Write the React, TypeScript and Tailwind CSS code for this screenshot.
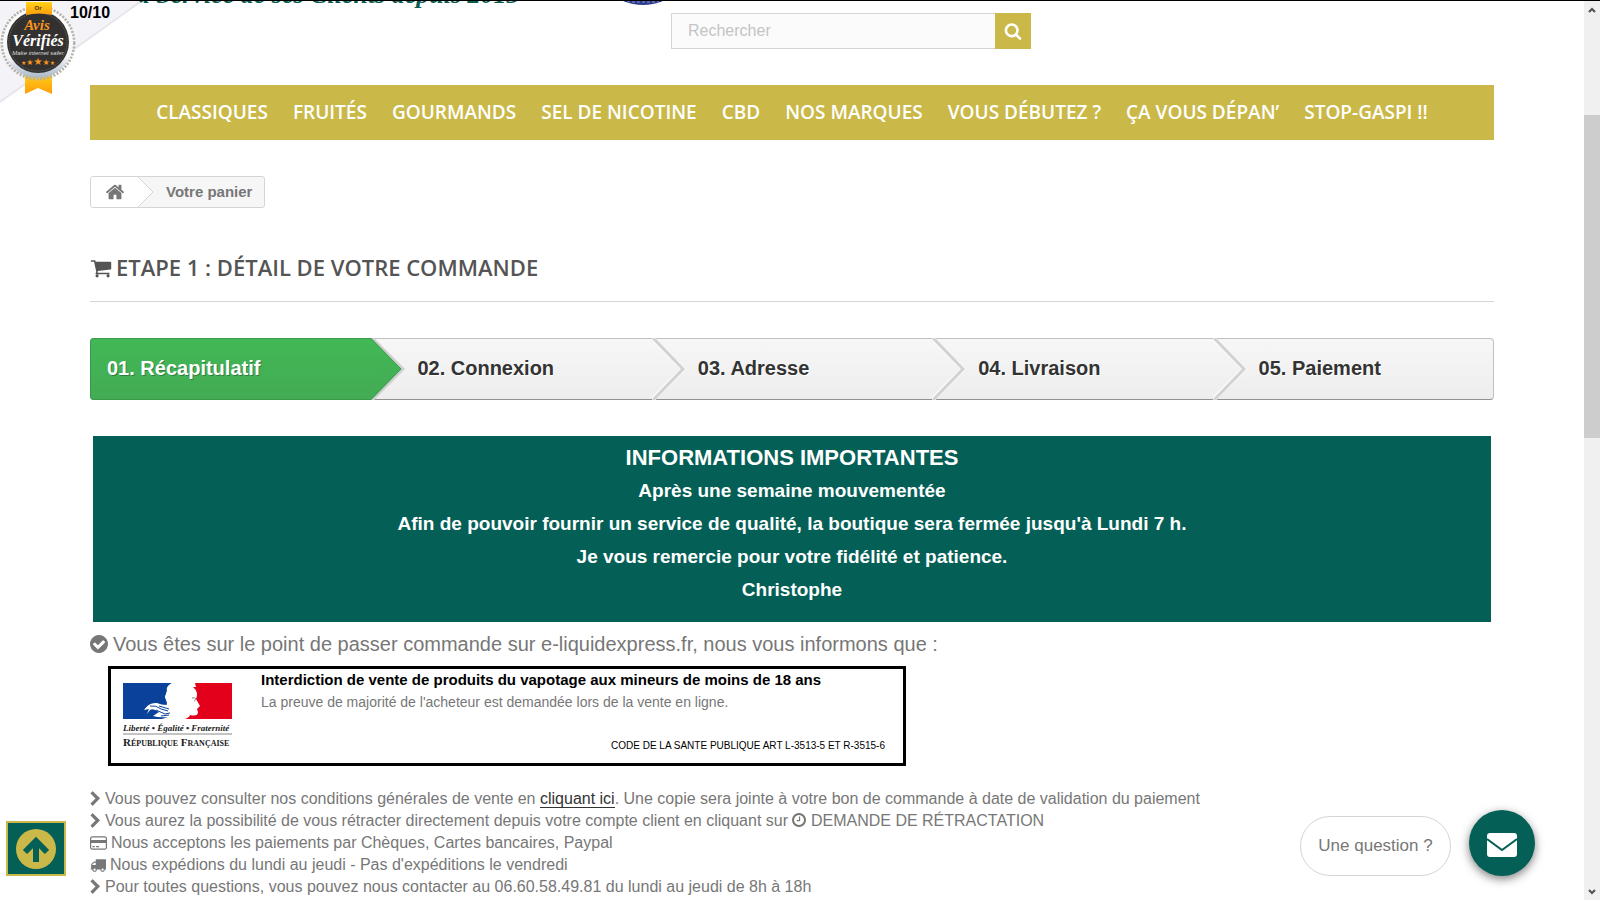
import { ReactNode, useState } from "react";

const ICONS = {
  home: "M1472 992v480q0 26-19 45t-45 19h-384v-384h-256v384h-384q-26 0-45-19t-19-45v-480q0-1 .5-3t.5-3l575-474 575 474q1 2 1 6zm223-69l-62 74q-8 9-21 11h-3q-13 0-21-7l-692-577-692 577q-12 8-24 7-13-2-21-11l-62-74q-8-10-7-23.500t11-21.500l719-599q32-26 76-26t76 26l244 204v-195q0-14 9-23t23-9h192q14 0 23 9t9 23v408l219 182q10 8 11 21.500t-7 23.500z",
  cart: "M704 1536q0 52-38 90t-90 38-90-38-38-90 38-90 90-38 90 38 38 90zm896 0q0 52-38 90t-90 38-90-38-38-90 38-90 90-38 90 38 38 90zm128-1088v512q0 24-16.500 42.500t-40.500 21.500l-1044 122q13 60 13 70 0 16-24 64h920q26 0 45 19t19 45-19 45-45 19h-1024q-26 0-45-19t-19-45q0-11 8-31.500t16-36 21.500-40 15.500-29.500l-177-823h-204q-26 0-45-19t-19-45 19-45 45-19h256q16 0 28.500 6.500t19.500 15.500 13 24.500 8 26 5.500 29.500 4.500 26h1201q26 0 45 19t19 45z",
  check: "M1412 734q0-28-18-46l-91-90q-19-19-45-19t-45 19l-408 407-226-226q-19-19-45-19t-45 19l-91 90q-18 18-18 46 0 27 18 45l362 362q19 19 45 19 27 0 46-19l543-543q18-18 18-45zm252 162q0 209-103 385.500t-279.500 279.500-385.500 103-385.500-103-279.500-279.500-103-385.500 103-385.500 279.500-279.500 385.500-103 385.500 103 279.500 279.500 103 385.500z",
  clock: "M1024 544v448q0 14-9 23t-23 9h-320q-14 0-23-9t-9-23v-64q0-14 9-23t23-9h224v-352q0-14 9-23t23-9h64q14 0 23 9t9 23zm416 352q0-148-73-273t-198-198-273-73-273 73-198 198-73 273 73 273 198 198 273 73 273-73 198-198 73-273zm224 0q0 209-103 385.500t-279.500 279.500-385.500 103-385.500-103-279.500-279.500-103-385.500 103-385.500 279.500-279.500 385.500-103 385.500 103 279.500 279.500 103 385.500z",
  truck: "M640 1408q0-52-38-90t-90-38-90 38-38 90 38 90 90 38 90-38 38-90zm-384-512h384v-256h-158q-13 0-22 9l-195 195q-9 9-9 22v30zm1280 512q0-52-38-90t-90-38-90 38-38 90 38 90 90 38 90-38 38-90zm256-1088v1024q0 15-4 26.500t-13.500 18.500-16.500 11.500-23.500 6-22.500 2-25.500 0-22.500-.5q0 106-75 181t-181 75-181-75-75-181h-384q0 106-75 181t-181 75-181-75-75-181h-64q-3 0-22.500.5t-25.500 0-22.500-2-23.500-6-16.500-11.500-13.500-18.500-4-26.500q0-26 19-45t45-19v-320q0-8-.5-35t0-38 2.500-34.500 6.500-37 14-30.500 22.500-30l198-198q19-19 50.500-32t58.500-13h160v-192q0-26 19-45t45-19h1024q26 0 45 19t19 45z",
  chevron: "M1363 877l-742 742q-19 19-45 19t-45-19l-166-166q-19-19-19-45t19-45l531-531-531-531q-19-19-19-45t19-45l166-166q19-19 45-19t45 19l742 742q19 19 19 45t-19 45z",
  search: "M1216 832q0-185-131.500-316.500t-316.500-131.500-316.500 131.500-131.500 316.500 131.500 316.500 316.500 131.500 316.500-131.500 131.500-316.500zm512 832q0 52-38 90t-90 38q-54 0-90-38l-343-342q-179 124-399 124-143 0-273.500-55.500t-225-150-150-225-55.500-273.500 55.500-273.500 150-225 225-150 273.500-55.500 273.500 55.500 225 150 150 225 55.500 273.500q0 220-124 399l343 343q37 37 37 90z",
  card: "M1568 192q92 0 158 66t66 158v960q0 92-66 158t-158 66h-1344q-92 0-158-66t-66-158v-960q0-92 66-158t158-66zm-1344 128q-40 0-68 28t-28 68v160h1536v-160q0-40-28-68t-68-28zm1344 1152q40 0 68-28t28-68v-480h-1536v480q0 40 28 68t68 28zm-1312-128v-128h256v128zm384 0v-128h320v128z",
};

const MENU = [
  "CLASSIQUES",
  "FRUITÉS",
  "GOURMANDS",
  "SEL DE NICOTINE",
  "CBD",
  "NOS MARQUES",
  "VOUS DÉBUTEZ ?",
  "ÇA VOUS DÉPAN’",
  "STOP-GASPI !!",
];

const STEPS = ["02. Connexion", "03. Adresse", "04. Livraison", "05. Paiement"];

function Icon({ name, className, viewBox = "0 0 1792 1792" }: { name: keyof typeof ICONS; className: string; viewBox?: string }) {
  return (
    <svg viewBox={viewBox} fill="currentColor" aria-hidden="true" className={className}>
      <path d={ICONS[name]} />
    </svg>
  );
}

function ReviewBadge() {
  return (
    <a href="#avis" className="absolute left-0 top-0" aria-label="Avis vérifiés">
      <svg width="150" height="108" viewBox="0 0 150 108">
        <defs>
          <linearGradient id="ribbon" x1="0" y1="0" x2="0" y2="1">
            <stop offset="0" stopColor="#ffd21a" />
            <stop offset="1" stopColor="#ff9d0a" />
          </linearGradient>
          <linearGradient id="ring" x1="0" y1="0" x2="0" y2="1">
            <stop offset="0" stopColor="#ffffff" />
            <stop offset="0.7" stopColor="#f3f5f8" />
            <stop offset="1" stopColor="#aab6c6" />
          </linearGradient>
        </defs>
        <path d="M0 0H140L0 101z" fill="#f4f3f8" />
        <path d="M140 1L0 101" stroke="#e6e6ea" strokeWidth="2" />
        <path d="M25 72h27v21l-14-6-13 6z" fill="url(#ribbon)" />
        <circle cx="38" cy="42" r="36" fill="none" stroke="#b5b1a4" strokeWidth="3" strokeDasharray="2 1.5" />
        <circle cx="38" cy="42" r="35" fill="url(#ring)" />
        <circle cx="38" cy="41" r="31" fill="#333130" />
        <circle cx="38" cy="41" r="29" fill="none" stroke="#6a6866" strokeDasharray="1 1" />
        <path d="M26 1h26v13q-13-3-26 0z" fill="url(#ribbon)" />
        <text x="38" y="9" textAnchor="middle" fontSize="6" fontWeight="700" fill="#4a3500" fontFamily="Liberation Sans, sans-serif">Or</text>
        <text x="37" y="29" textAnchor="middle" fontSize="15" fontWeight="700" fontStyle="italic" fill="#f7931e" fontFamily="Liberation Serif, serif">Avis</text>
        <text x="38" y="45" textAnchor="middle" fontSize="16" fontWeight="700" fontStyle="italic" fill="#fff" fontFamily="Liberation Serif, serif">Vérifiés</text>
        <text x="38" y="54" textAnchor="middle" fontSize="6" fontStyle="italic" fill="#ddd" fontFamily="Liberation Sans, sans-serif">Make internet safer</text>
        <text x="38" y="64" textAnchor="middle" fontSize="6" fill="#f7931e" fontFamily="DejaVu Sans, sans-serif">
          ★<tspan fontSize="8">★</tspan><tspan fontSize="10">★</tspan><tspan fontSize="8">★</tspan>★
        </text>
        <text x="70" y="17" fontSize="16" fontWeight="700" fill="#000" fontFamily="Liberation Sans, sans-serif">10/10</text>
      </svg>
    </a>
  );
}

function RepubliqueLogo() {
  return (
    <svg width="110" height="66" viewBox="0 0 110 66" role="img" aria-label="République Française" className="shrink-0">
      <path d="M0 0H49Q43 3 44 8L42 14 44 20 43 25 48 29 47 33 48 36H0z" fill="#0a419b" />
      <path d="M49 0Q43 3 44 8L42 14 45 20Q44 25 49 28L52 36H62L64 20 60 2z" fill="#fff" />
      <path d="M21 27Q26 19 34 20 38 22 44 22L52 27 50 36H39L45 34Q36 35 30 33L36 29Q30 25 27 27L24 31 26 26z" fill="#fff" />
      <path d="M27 23Q33 22 38 26L45 28M33 27L42 31 47 30M36 23L46 26M38 33L46 32" stroke="#0a419b" fill="none" />
      <path d="M72 0H109V36H62Q67 34 67 32 75 34 75 29L74 26 77 23 73 16Q76 9 70 4L73 4z" fill="#e2001a" />
      <path d="M69 15q3-1 4 1-1 2-2 2" stroke="#888" fill="none" />
      <text x="0" y="48" fontSize="9" fontWeight="700" fontStyle="italic" fill="#222" fontFamily="Liberation Serif, serif">Liberté • Égalité • Fraternité</text>
      <path d="M0 51H109" stroke="#888" />
      <text x="0" y="63" fontSize="11" fontWeight="700" fill="#222" fontFamily="Liberation Serif, serif">
        R<tspan fontSize="8">ÉPUBLIQUE</tspan> F<tspan fontSize="8">RANÇAISE</tspan>
      </text>
    </svg>
  );
}

function StepArrow({ done }: { done?: boolean }) {
  return (
    <svg width="34" height="62" viewBox="0 0 34 62" aria-hidden="true" className="-my-px shrink-0">
      {done ? (
        <>
          <defs>
            <linearGradient id="done" x1="0" y1="0" x2="0" y2="1">
              <stop offset="0" stopColor="#42b856" />
              <stop offset="1" stopColor="#43ab54" />
            </linearGradient>
          </defs>
          <path d="M1 0L32 31 1 62" stroke="#cfcfcf" strokeWidth="3" fill="none" />
          <path d="M0 0L30 31 0 62z" fill="url(#done)" />
          <path d="M0 0.500L30 31 0 61.500" stroke="#399b49" fill="none" />
        </>
      ) : (
        <>
          <path d="M0 0L31 31 0 62" stroke="#f9f9f9" strokeWidth="5" fill="none" />
          <path d="M1 0L31 31 1 62" stroke="#d2d2d2" strokeWidth="3" fill="none" />
        </>
      )}
    </svg>
  );
}

function InfoLine({ icon, children }: { icon: ReactNode; children: ReactNode }) {
  return (
    <li className="flex items-center gap-1">
      {icon}
      <span>{children}</span>
    </li>
  );
}

function Scrollbar() {
  return (
    <div aria-hidden="true" className="flex w-4 shrink-0 flex-col items-center bg-[#f0f0f0]">
      <svg width="16" height="17" viewBox="0 0 16 17" fill="none" stroke="#505050" strokeWidth="2">
        <path d="M5 11l3-3 3 3" />
      </svg>
      <div className="mt-[97px] h-[323px] w-full bg-[#cdcdcd]" />
      <svg width="16" height="17" viewBox="0 0 16 17" fill="none" stroke="#505050" strokeWidth="2" className="mt-auto">
        <path d="M5 7l3 3 3-3" />
      </svg>
    </div>
  );
}

export default function App() {
  const [query, setQuery] = useState("");
  const chevron = <Icon name="chevron" viewBox="320 0 1152 1792" className="h-4 w-[11px]" />;

  return (
    <div className="flex h-screen overflow-hidden border-t border-black bg-white font-['Liberation_Sans',Arial,sans-serif] text-[#777]">
      <div className="relative min-w-0 flex-1 overflow-hidden">
        <div className="px-[90px]">
          <header className="grid grid-cols-[581px_360px] pb-9">
            <div className="flex h-3 justify-between overflow-hidden pl-7">
              <span className="-mt-6 whitespace-nowrap font-['Liberation_Serif',serif] text-[26px]/9 font-bold italic text-[#0a5c52]">
                Au Service de ses Clients depuis 2013
              </span>
              <svg width="56" height="5" viewBox="0 0 56 5" aria-hidden="true">
                <circle cx="28" cy="-46" r="50" fill="#2c3a8c" />
                <path d="M12 1h32" stroke="#8e96c8" strokeDasharray="3 2" />
              </svg>
            </div>
            <form className="mt-3 flex h-9" onSubmit={(e) => e.preventDefault()}>
              <input
                type="text"
                aria-label="Rechercher"
                placeholder="Rechercher"
                value={query}
                onChange={(e) => setQuery(e.target.value)}
                className="min-w-0 flex-1 border border-r-0 border-[#d6d4d4] bg-[#fbfbfb] px-4 text-base placeholder:text-[#c4c4c4]"
              />
              <button type="submit" aria-label="Lancer la recherche" className="flex w-9 items-center justify-center bg-[#cab848] text-white">
                <Icon name="search" className="size-[18px]" />
              </button>
            </form>
          </header>

          <nav className="flex h-[55px] items-center justify-center gap-[25px] bg-[#cab848] font-['Open_Sans',sans-serif] text-[19px] font-semibold text-white">
            {MENU.map((label) => (
              <a key={label} href="#menu" className="whitespace-nowrap">
                {label}
              </a>
            ))}
          </nav>

          <div className="mt-9 flex h-8 w-fit overflow-hidden rounded-[3px] border border-[#d6d4d4] bg-[#f6f6f6] text-[15px] font-bold">
            <a href="#accueil" aria-label="Accueil" className="flex w-[47px] items-center justify-center bg-white">
              <Icon name="home" className="size-5" />
            </a>
            <svg width="16" height="30" viewBox="0 0 16 30" aria-hidden="true">
              <path d="M0 0L15 15 0 30z" fill="#fff" />
              <path d="M0 0L15 15 0 30" stroke="#d6d4d4" fill="none" />
            </svg>
            <span className="flex items-center px-3">Votre panier</span>
          </div>

          <h1 className="mt-9 flex h-[58px] items-center gap-1 border-b border-[#d6d4d4] pb-[10px] font-['Open_Sans',sans-serif] text-[22px] font-semibold text-[#555454]">
            <Icon name="cart" className="size-[22px]" />
            ETAPE 1 : DÉTAIL DE VOTRE COMMANDE
          </h1>

          <ol className="mt-9 grid h-[62px] grid-cols-5 rounded-[4px] border border-[#c0c0c0] border-b-[#929292] bg-linear-to-b from-[#f7f7f7] to-[#ededed] text-xl font-bold text-[#333]">
            <li className="-my-px -ml-px flex items-center rounded-l-[4px] border border-r-0 border-[#399b49] bg-linear-to-b from-[#42b856] to-[#43ab54] pb-[2px] pl-4 text-white [text-shadow:1px_1px_rgba(0,0,0,0.3)]">
              01. Récapitulatif
            </li>
            {STEPS.map((step, i) => (
              <li key={step} className="flex items-center gap-3 [text-shadow:1px_1px_#fff]">
                <StepArrow done={i === 0} />
                <span className="pb-[2px]">{step}</span>
              </li>
            ))}
          </ol>

          <section className="mx-[3px] mt-9 bg-[#045f56] pb-4 pt-[6px] text-center text-[19px]/[33px] font-bold text-white">
            <h2 className="text-[22px]/[32px]">INFORMATIONS IMPORTANTES</h2>
            <p>Après une semaine mouvementée</p>
            <p>Afin de pouvoir fournir un service de qualité, la boutique sera fermée jusqu'à Lundi 7 h.</p>
            <p>Je vous remercie pour votre fidélité et patience.</p>
            <p>Christophe</p>
          </section>

          <p className="flex h-11 items-center gap-[5px] text-[20px]">
            <Icon name="check" viewBox="128 128 1536 1536" className="size-[18px]" />
            Vous êtes sur le point de passer commande sur e-liquidexpress.fr, nous vous informons que :
          </p>

          <section className="ml-[18px] flex h-[100px] w-[798px] gap-7 border-[3px] border-black pl-3 pr-[18px]">
            <div className="pt-[14px]">
              <RepubliqueLogo />
            </div>
            <div className="flex flex-1 flex-col text-sm/[22px]">
              <strong className="text-[15px]/[22px] text-black">Interdiction de vente de produits du vapotage aux mineurs de moins de 18 ans</strong>
              <span>La preuve de majorité de l'acheteur est demandée lors de la vente en ligne.</span>
              <small className="mt-auto pb-[6px] text-right text-[10px]/[22px] text-black">CODE DE LA SANTE PUBLIQUE ART L-3513-5 ET R-3515-6</small>
            </div>
          </section>

          <ul className="mt-[22px] whitespace-nowrap text-base/[22px]">
            <InfoLine icon={chevron}>
              Vous pouvez consulter nos conditions générales de vente en{" "}
              <a href="#cgv" className="border-b border-[#333] text-[#333]">cliquant ici</a>. Une copie sera jointe à votre bon de commande à date de validation du paiement
            </InfoLine>
            <InfoLine icon={chevron}>
              Vous aurez la possibilité de vous rétracter directement depuis votre compte client en cliquant sur{" "}
              <Icon name="clock" viewBox="128 128 1536 1536" className="inline size-[14px] align-[-1px]" /> DEMANDE DE RÉTRACTATION
            </InfoLine>
            <InfoLine icon={<Icon name="card" viewBox="0 128 1792 1536" className="h-4 w-[17px]" />}>
              Nous acceptons les paiements par Chèques, Cartes bancaires, Paypal
            </InfoLine>
            <InfoLine icon={<Icon name="truck" className="size-4" />}>
              Nous expédions du lundi au jeudi - Pas d'expéditions le vendredi
            </InfoLine>
            <InfoLine icon={chevron}>Pour toutes questions, vous pouvez nous contacter au 06.60.58.49.81 du lundi au jeudi de 8h à 18h</InfoLine>
          </ul>
        </div>

        <ReviewBadge />

        <button type="button" aria-label="Haut de page" className="absolute bottom-6 left-[6px] flex h-[55px] w-[60px] items-center justify-center border-2 border-[#cab848] bg-[#045f56]">
          <svg width="40" height="40" viewBox="0 0 40 40">
            <circle cx="20" cy="20" r="20" fill="#cab848" />
            <path d="M20 33V12M9 23L20 12l11 11" stroke="#045f56" strokeWidth="6" fill="none" />
          </svg>
        </button>

        <div className="absolute bottom-6 right-[49px] flex items-end gap-[18px]">
          <button type="button" className="h-[60px] w-[151px] rounded-full border border-[#d6d4d4] bg-white text-[17px]">
            Une question ?
          </button>
          <button type="button" aria-label="Nous écrire" className="flex size-[66px] items-center justify-center rounded-full bg-[#045f56] shadow-[0_3px_10px_rgba(0,0,0,0.5)]">
            <svg width="30" height="24" viewBox="0 0 30 24" className="mt-1">
              <rect width="30" height="24" rx="3" fill="#fff" />
              <path d="M0 6L15 17 30 6" stroke="#045f56" strokeWidth="2" fill="none" />
            </svg>
          </button>
        </div>
      </div>
      <Scrollbar />
    </div>
  );
}
